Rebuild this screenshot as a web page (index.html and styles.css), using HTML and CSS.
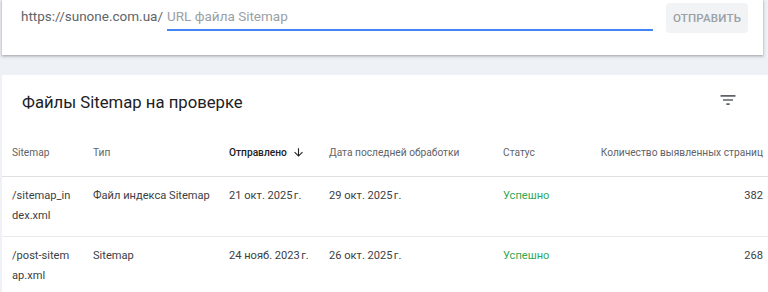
FILE: index.html
```html
<!DOCTYPE html>
<html lang="ru">
<head>
<meta charset="utf-8">
<link rel="stylesheet" href="styles.css">
</head>
<body>
<div class="page">
  <div class="submit-card">
    <div class="url-field">
      <span class="prefix">https://sunone.com.ua/</span>
      <div class="input"><span class="placeholder">URL файла Sitemap</span></div>
    </div>
    <button class="submit-btn">ОТПРАВИТЬ</button>
  </div>

  <div class="table-card">
    <div class="title-row">
      <h2 class="title">Файлы Sitemap на проверке</h2>
      <svg class="filter-icon" viewBox="0 0 24 24" width="20" height="20"><path d="M10 18h4v-2h-4v2zM3 6v2h18V6H3zm3 7h12v-2H6v2z" fill="#5f6368"/></svg>
    </div>
    <div class="grid head">
      <div class="c c1">Sitemap</div>
      <div class="c c2">Тип</div>
      <div class="c c3 sorted">Отправлено <svg class="arrow" viewBox="0 0 24 24" width="13" height="13"><path d="M20 12l-1.41-1.41L13 16.17V4h-2v12.17l-5.58-5.59L4 12l8 8 8-8z" fill="#202124"/></svg></div>
      <div class="c c4">Дата последней обработки</div>
      <div class="c c5">Статус</div>
      <div class="c c6">Количество выявленных страниц</div>
    </div>
    <div class="grid row">
      <div class="c c1 path">/sitemap_index.xml</div>
      <div class="c c2">Файл индекса Sitemap</div>
      <div class="c c3">21 окт. 2025&#8239;г.</div>
      <div class="c c4">29 окт. 2025&#8239;г.</div>
      <div class="c c5 ok">Успешно</div>
      <div class="c c6">382</div>
    </div>
    <div class="grid row">
      <div class="c c1 path">/post-sitemap.xml</div>
      <div class="c c2">Sitemap</div>
      <div class="c c3">24 нояб. 2023&#8239;г.</div>
      <div class="c c4">26 окт. 2025&#8239;г.</div>
      <div class="c c5 ok">Успешно</div>
      <div class="c c6">268</div>
    </div>
  </div>
</div>
</body>
</html>
```

FILE: styles.css
```css
* { box-sizing: border-box; }
html, body {
  margin: 0;
  padding: 0;
  background: #eef1f6;
  font-family: Roboto, "Noto Sans", Arial, sans-serif;
  overflow: hidden;
}
.page {
  padding-left: 2px;
  width: 768px;
  height: 292px;
  overflow: hidden;
}
.submit-card {
  background: #fff;
  height: 55px;
  margin-right: 5px;
  display: flex;
  align-items: flex-start;
  padding: 3px 15px 0 19px;
  box-shadow: 0 1px 2px rgba(60,64,67,.3), 0 1px 3px 1px rgba(60,64,67,.15);
}
.url-field {
  display: flex;
  align-items: flex-end;
  height: 28px;
  flex: 1;
}
.prefix {
  font-size: 13.5px;
  color: #5f6368;
  line-height: 20px;
  padding-bottom: 5px;
  margin-right: 4px;
}
.input {
  flex: 1;
  height: 28px;
  border-bottom: 2px solid #4285f4;
  display: flex;
  align-items: flex-end;
  padding-bottom: 3px;
}
.placeholder {
  font-size: 13.5px;
  color: #9aa0a6;
  line-height: 20px;
}
.submit-btn {
  margin-left: 13px;
  width: 82px;
  height: 30px;
  border: none;
  border-radius: 4px;
  background: #f1f3f4;
  color: #9aa0a6;
  font-family: Roboto, sans-serif;
  font-size: 11.5px;
  font-weight: 500;
  letter-spacing: 0.2px;
  padding: 0;
}
.table-card {
  margin-top: 20px;
  background: #fff;
  height: 217px;
  overflow: hidden;
}
.title-row {
  height: 54px;
  display: flex;
  align-items: center;
  justify-content: space-between;
  padding: 0 30px 0 20px;
}
.title {
  margin: 0;
  font-size: 16.7px;
  font-weight: 400;
  color: #202124;
}
.filter-icon { margin-top: -4px; }
.grid {
  display: grid;
  grid-template-columns: 81px 136px 100px 174px 1fr auto;
  padding-right: 5px;
  padding-left: 10px;
}
.head {
  height: 48px;
  align-items: center;
  font-size: 10.2px;
  color: #5f6368;
  border-bottom: 1px solid #e0e0e0;
}
.sorted {
  color: #202124;
  font-weight: 500;
  display: flex;
  align-items: center;
}
.arrow { margin-left: 5px; }
.row {
  height: 60px;
  padding-top: 9px;
  font-size: 11.1px;
  line-height: 20px;
  color: #3c4043;
  border-bottom: 1px solid #e8eaed;
}
.path {
  word-break: break-all;
  padding-right: 21px;
}
.ok { color: #34a853; }
.c6 { text-align: right; }
```
